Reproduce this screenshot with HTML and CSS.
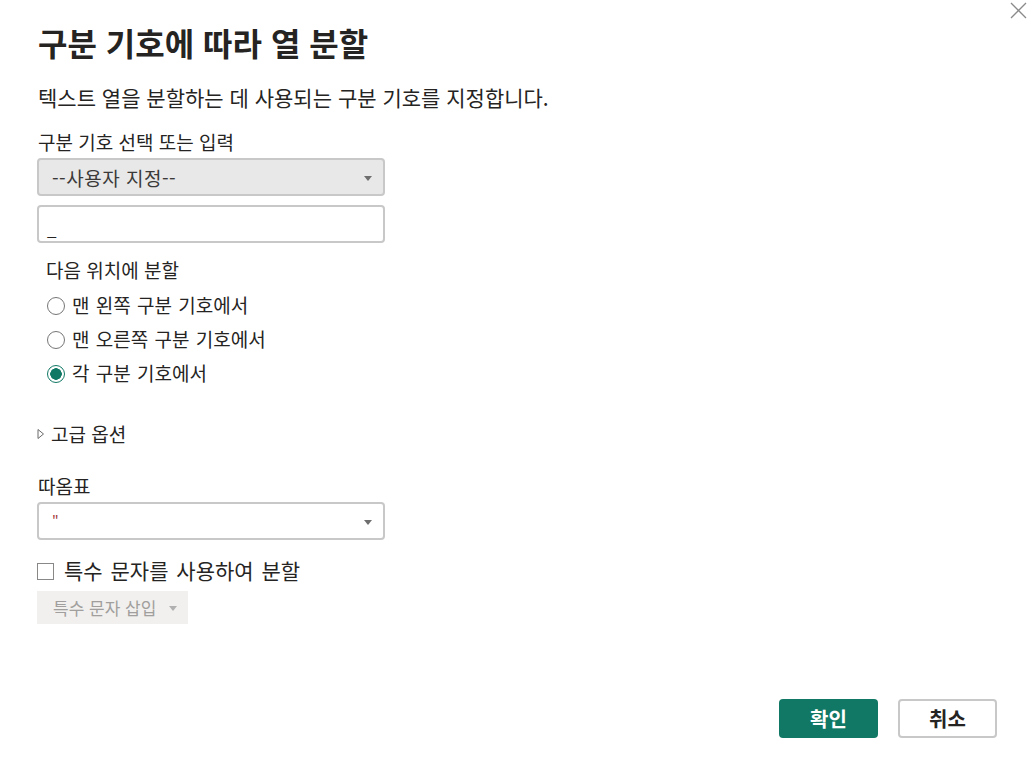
FILE: index.html
```html
<!DOCTYPE html>
<html lang="ko">
<head>
<meta charset="utf-8">
<link rel="stylesheet" href="styles.css">
</head>
<body>
<div class="dialog">
  <button class="close" aria-label="닫기">
    <svg width="17" height="17" viewBox="0 0 17 17"><path d="M1 1L16 16M16 1L1 16" stroke="#8a8a8a" stroke-width="1.3" fill="none"/></svg>
  </button>
  <h1 class="title">구분 기호에 따라 열 분할</h1>
  <p class="desc">텍스트 열을 분할하는 데 사용되는 구분 기호를 지정합니다.</p>

  <div class="label">구분 기호 선택 또는 입력</div>
  <div class="select select-gray">
    <span class="sel-text">--사용자 지정--</span>
    <span class="caret"></span>
  </div>
  <div class="input"><span>_</span></div>

  <div class="group-label">다음 위치에 분할</div>
  <div class="radios">
    <div class="radio-row"><span class="radio"></span><span>맨 왼쪽 구분 기호에서</span></div>
    <div class="radio-row"><span class="radio"></span><span>맨 오른쪽 구분 기호에서</span></div>
    <div class="radio-row"><span class="radio checked"></span><span>각 구분 기호에서</span></div>
  </div>

  <div class="advanced">
    <svg width="8" height="12" viewBox="0 0 8 12"><path d="M1 1.5L6.5 6L1 10.5Z" fill="none" stroke="#6b6b6b" stroke-width="1"/></svg>
    <span>고급 옵션</span>
  </div>

  <div class="label quote-label">따옴표</div>
  <div class="select select-white">
    <span class="quote">"</span>
    <span class="caret"></span>
  </div>

  <div class="check-row"><span class="checkbox"></span><span>특수 문자를 사용하여 분할</span></div>
  <div class="insert-btn"><span>특수 문자 삽입</span><span class="caret light"></span></div>

  <div class="footer">
    <button class="btn primary">확인</button>
    <button class="btn secondary">취소</button>
  </div>
</div>
</body>
</html>
```

FILE: styles.css
```css
html, body {
  margin: 0;
  padding: 0;
  background: #ffffff;
}
body {
  font-family: "Noto Sans CJK KR", "Noto Sans", sans-serif;
  color: #252423;
  width: 1033px;
  height: 776px;
  overflow: hidden;
}
.dialog {
  position: relative;
  box-sizing: border-box;
  width: 1033px;
  height: 776px;
  padding: 20px 0 0 38px;
  display: flex;
  flex-direction: column;
  align-items: flex-start;
}
.close {
  position: absolute;
  top: 2px;
  right: 6px;
  border: 0;
  background: transparent;
  padding: 0;
  width: 17px;
  height: 17px;
}
.title {
  margin: 0;
  font-size: 32px;
  font-weight: 700;
  line-height: 44px;
  color: #252423;
}
.desc {
  margin: 20px 0 0 0;
  font-size: 21px;
  line-height: 26px;
  color: #252423;
}
.label {
  margin-top: 20px;
  font-size: 19px;
  line-height: 24px;
  color: #252423;
}
.select, .input {
  box-sizing: border-box;
  width: 348px;
  height: 38px;
  border: 2px solid #c8c8c8;
  border-radius: 4px;
  margin-left: -1px;
  flex-shrink: 0;
}
.select {
  margin-top: 4px;
  display: flex;
  align-items: center;
  justify-content: space-between;
  padding: 0 11px 0 13px;
  font-size: 19px;
}
.select-gray {
  background: #e8e8e8;
  color: #3b3a39;
}
.sel-text {
  letter-spacing: 0.5px;
}
.caret {
  width: 0;
  height: 0;
  border-left: 4.5px solid transparent;
  border-right: 4.5px solid transparent;
  border-top: 5px solid #6e6e6e;
  margin-top: 2px;
}
.caret.light {
  border-top-color: #b0b0b0;
}
.input {
  margin-top: 9px;
  background: #fff;
  font-size: 17px;
  padding: 9px 0 0 8px;
  color: #252423;
}
.group-label {
  margin-top: 15px;
  margin-left: 8px;
  font-size: 19px;
  line-height: 24px;
}
.radios {
  margin-top: 11px;
  margin-left: 9px;
  display: flex;
  flex-direction: column;
  gap: 10px;
}
.radio-row {
  display: flex;
  align-items: center;
  gap: 7px;
  font-size: 19px;
  line-height: 24px;
  word-spacing: 1px;
}
.radio {
  box-sizing: border-box;
  width: 18px;
  height: 18px;
  border: 1.6px solid #767676;
  border-radius: 50%;
  background: #fff;
  position: relative;
  top: 1px;
}
.radio.checked {
  border: 1.6px solid #117865;
  background: radial-gradient(circle, #117865 0 5.5px, #fff 6px);
}
.advanced {
  margin-top: 37px;
  margin-left: -1px;
  display: flex;
  align-items: center;
  gap: 6px;
  font-size: 19px;
  line-height: 24px;
}
.quote-label {
  margin-top: 28px;
}
.select-white {
  margin-top: 4px;
  background: #ffffff;
}
.quote {
  color: #a4373a;
  font-size: 14px;
  align-self: flex-start;
  margin-top: 7px;
}
.check-row {
  margin-top: 18px;
  margin-left: -1px;
  display: flex;
  align-items: center;
  gap: 10px;
  font-size: 21px;
  line-height: 24px;
  word-spacing: 2px;
}
.checkbox {
  box-sizing: border-box;
  width: 17px;
  height: 17px;
  border: 1px solid #8a8886;
  background: #fff;
  position: relative;
  top: 1px;
}
.insert-btn {
  margin-top: 9px;
  margin-left: -1px;
  box-sizing: border-box;
  width: 151px;
  height: 33px;
  flex-shrink: 0;
  background: #f1f0ef;
  color: #a19f9d;
  font-size: 17px;
  display: flex;
  align-items: center;
  justify-content: space-between;
  padding: 0 11px 0 16px;
}
.footer {
  position: absolute;
  right: 36px;
  bottom: 38px;
  display: flex;
  gap: 20px;
}
.btn {
  box-sizing: border-box;
  width: 99px;
  height: 39px;
  border-radius: 4px;
  font-family: "Noto Sans CJK KR", sans-serif;
  font-size: 20px;
  font-weight: 700;
  padding: 0;
}
.btn.primary {
  background: #117865;
  color: #ffffff;
  border: 0;
}
.btn.secondary {
  background: #ffffff;
  color: #252423;
  border: 2px solid #c8c8c8;
}
```
